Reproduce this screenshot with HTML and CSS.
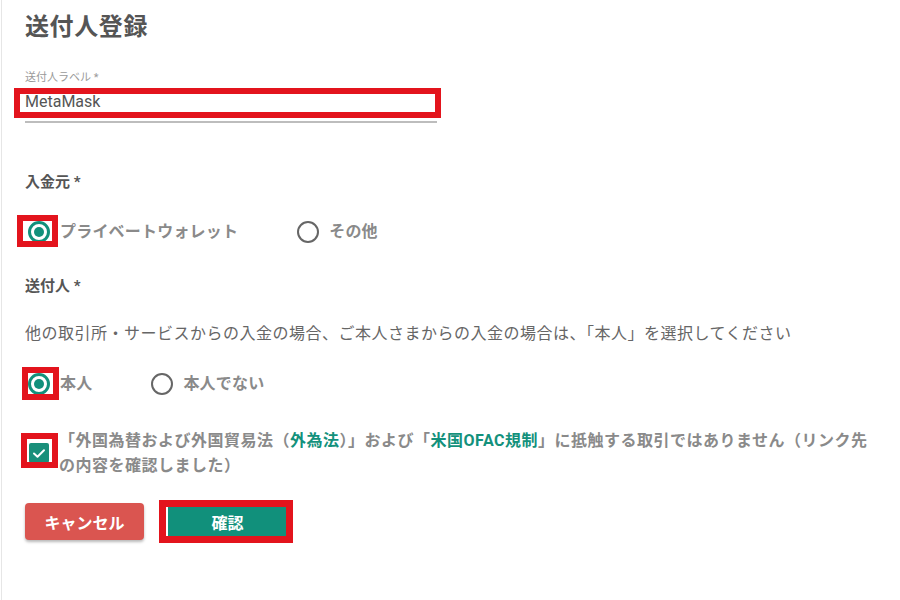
FILE: index.html
```html
<!DOCTYPE html>
<html lang="ja">
<head>
<meta charset="utf-8">
<title>送付人登録</title>
<link rel="stylesheet" href="styles.css">
</head>
<body>
<main class="page">
  <h1 class="title">送付人登録</h1>

  <div class="field">
    <div class="field-label">送付人ラベル *</div>
    <div class="input-wrap">
      <div class="input">MetaMask</div>
      <span class="mark mark-input"></span>
    </div>
  </div>

  <h2 class="group-label group-source">入金元 *</h2>
  <div class="radios radios-source">
    <label class="radio">
      <span class="ring ring-on"><span class="dot"></span><span class="mark mark-radio1"></span></span>
      <span class="radio-text">プライベートウォレット</span>
    </label>
    <label class="radio">
      <span class="ring"></span>
      <span class="radio-text">その他</span>
    </label>
  </div>

  <h2 class="group-label group-sender">送付人 *</h2>
  <p class="desc">他の取引所・サービスからの入金の場合、ご本人さまからの入金の場合は、「本人」を選択してください</p>
  <div class="radios radios-sender">
    <label class="radio">
      <span class="ring ring-on"><span class="dot"></span><span class="mark mark-radio2"></span></span>
      <span class="radio-text">本人</span>
    </label>
    <label class="radio">
      <span class="ring"></span>
      <span class="radio-text">本人でない</span>
    </label>
  </div>

  <div class="agree">
    <span class="check">
      <svg viewBox="0 0 20 20" width="20" height="20"><polyline points="5,10.5 8.5,13.8 15,7.2" fill="none" stroke="#fff" stroke-width="2" stroke-linecap="round" stroke-linejoin="round"/></svg>
      <span class="mark mark-check"></span>
    </span>
    <p class="agree-text">「外国為替および外国貿易法（<a class="link" href="#">外為法</a>）」および「<a class="link" href="#">米国OFAC規制</a>」に抵触する取引ではありません（リンク先<br>の内容を確認しました）</p>
  </div>

  <div class="actions">
    <button class="btn btn-cancel">キャンセル</button>
    <span class="btn-wrap">
      <button class="btn btn-confirm">確認</button>
      <span class="mark mark-confirm"></span>
    </span>
  </div>
</main>
</body>
</html>
```

FILE: styles.css
```css
* { box-sizing: border-box; }

html, body {
  margin: 0;
  padding: 0;
  background: #fff;
}

body {
  font-family: "Roboto", "Noto Sans CJK JP", sans-serif;
  color: #555;
}

.page {
  margin-left: 1px;
  border-left: 1px solid #e6e6e6;
  min-height: 600px;
  padding: 11px 0 0 23px;
}

.title {
  margin: 0;
  font-size: 24px;
  line-height: 32px;
  font-weight: 700;
  color: #555;
  letter-spacing: 0.6px;
}

.field {
  margin-top: 27px;
  width: 412px;
}

.field-label {
  font-size: 11px;
  line-height: 16px;
  color: #9a9a9a;
}

.input-wrap {
  position: relative;
  margin-top: 3px;
}

.input {
  font-size: 16px;
  line-height: 24px;
  color: #555;
  padding-top: 1px;
  padding-bottom: 7px;
  border-bottom: 2px solid #bdbdbd;
}

.mark {
  position: absolute;
  border: 6px solid #e3141d;
  pointer-events: none;
}

.mark-input {
  left: -11px;
  top: -1px;
  width: 427px;
  height: 30px;
}

.group-label {
  margin: 0;
  font-size: 15px;
  line-height: 22px;
  font-weight: 700;
  color: #555;
}

.group-source { margin-top: 48px; }
.group-sender { margin-top: 31px; }

.radios {
  display: flex;
  gap: 56px;
  height: 24px;
  align-items: center;
}

.radios-source { margin-top: 27px; }
.radios-sender { margin-top: 26px; }

.radio {
  display: flex;
  align-items: center;
  gap: 10px;
}

.ring {
  position: relative;
  width: 22px;
  height: 22px;
  margin-left: 3px;
  border: 2px solid #666;
  border-radius: 50%;
  display: flex;
  align-items: center;
  justify-content: center;
}

.ring-on {
  border: 3px solid #12907b;
}

.dot {
  width: 10px;
  height: 10px;
  border-radius: 50%;
  background: #12907b;
}

.mark-radio1 {
  left: -14px;
  top: -9px;
  width: 41px;
  height: 32px;
}

.mark-radio2 {
  left: -9px;
  top: -9px;
  width: 37px;
  height: 33px;
}

.radio-text {
  font-size: 16px;
  line-height: 24px;
  font-weight: 700;
  color: #8a8a8a;
  letter-spacing: 0.2px;
}

.desc {
  margin: 25px 0 0;
  font-size: 16px;
  line-height: 24px;
  color: #666;
  letter-spacing: 0.5px;
}

.agree {
  margin-top: 32px;
  display: flex;
  align-items: center;
  gap: 10px;
}

.check {
  position: relative;
  flex: none;
  width: 20px;
  height: 20px;
  margin-left: 4px;
  border-radius: 2px;
  background: #198f7a;
  display: flex;
}

.mark-check {
  left: -8px;
  top: -10px;
  width: 37px;
  height: 35px;
}

.agree-text {
  margin: 0;
  font-size: 16px;
  line-height: 25px;
  font-weight: 700;
  color: #8a8a8a;
  letter-spacing: 0.5px;
}

.link {
  color: #13917c;
  text-decoration: none;
}

.actions {
  margin-top: 25px;
  display: flex;
  gap: 24px;
}

.btn {
  width: 119px;
  height: 37px;
  border: none;
  border-radius: 4px;
  font-family: "Roboto", "Noto Sans CJK JP", sans-serif;
  font-size: 16px;
  font-weight: 700;
  color: #fff;
  padding: 0;
}

.btn-cancel {
  background: #da5550;
  box-shadow: 0 2px 3px rgba(0, 0, 0, 0.28);
}

.btn-wrap {
  position: relative;
  display: flex;
}

.btn-confirm {
  background: #11907b;
}

.mark-confirm {
  left: -9px;
  top: -3px;
  width: 134px;
  height: 43px;
  border-width: 7px;
}
```
